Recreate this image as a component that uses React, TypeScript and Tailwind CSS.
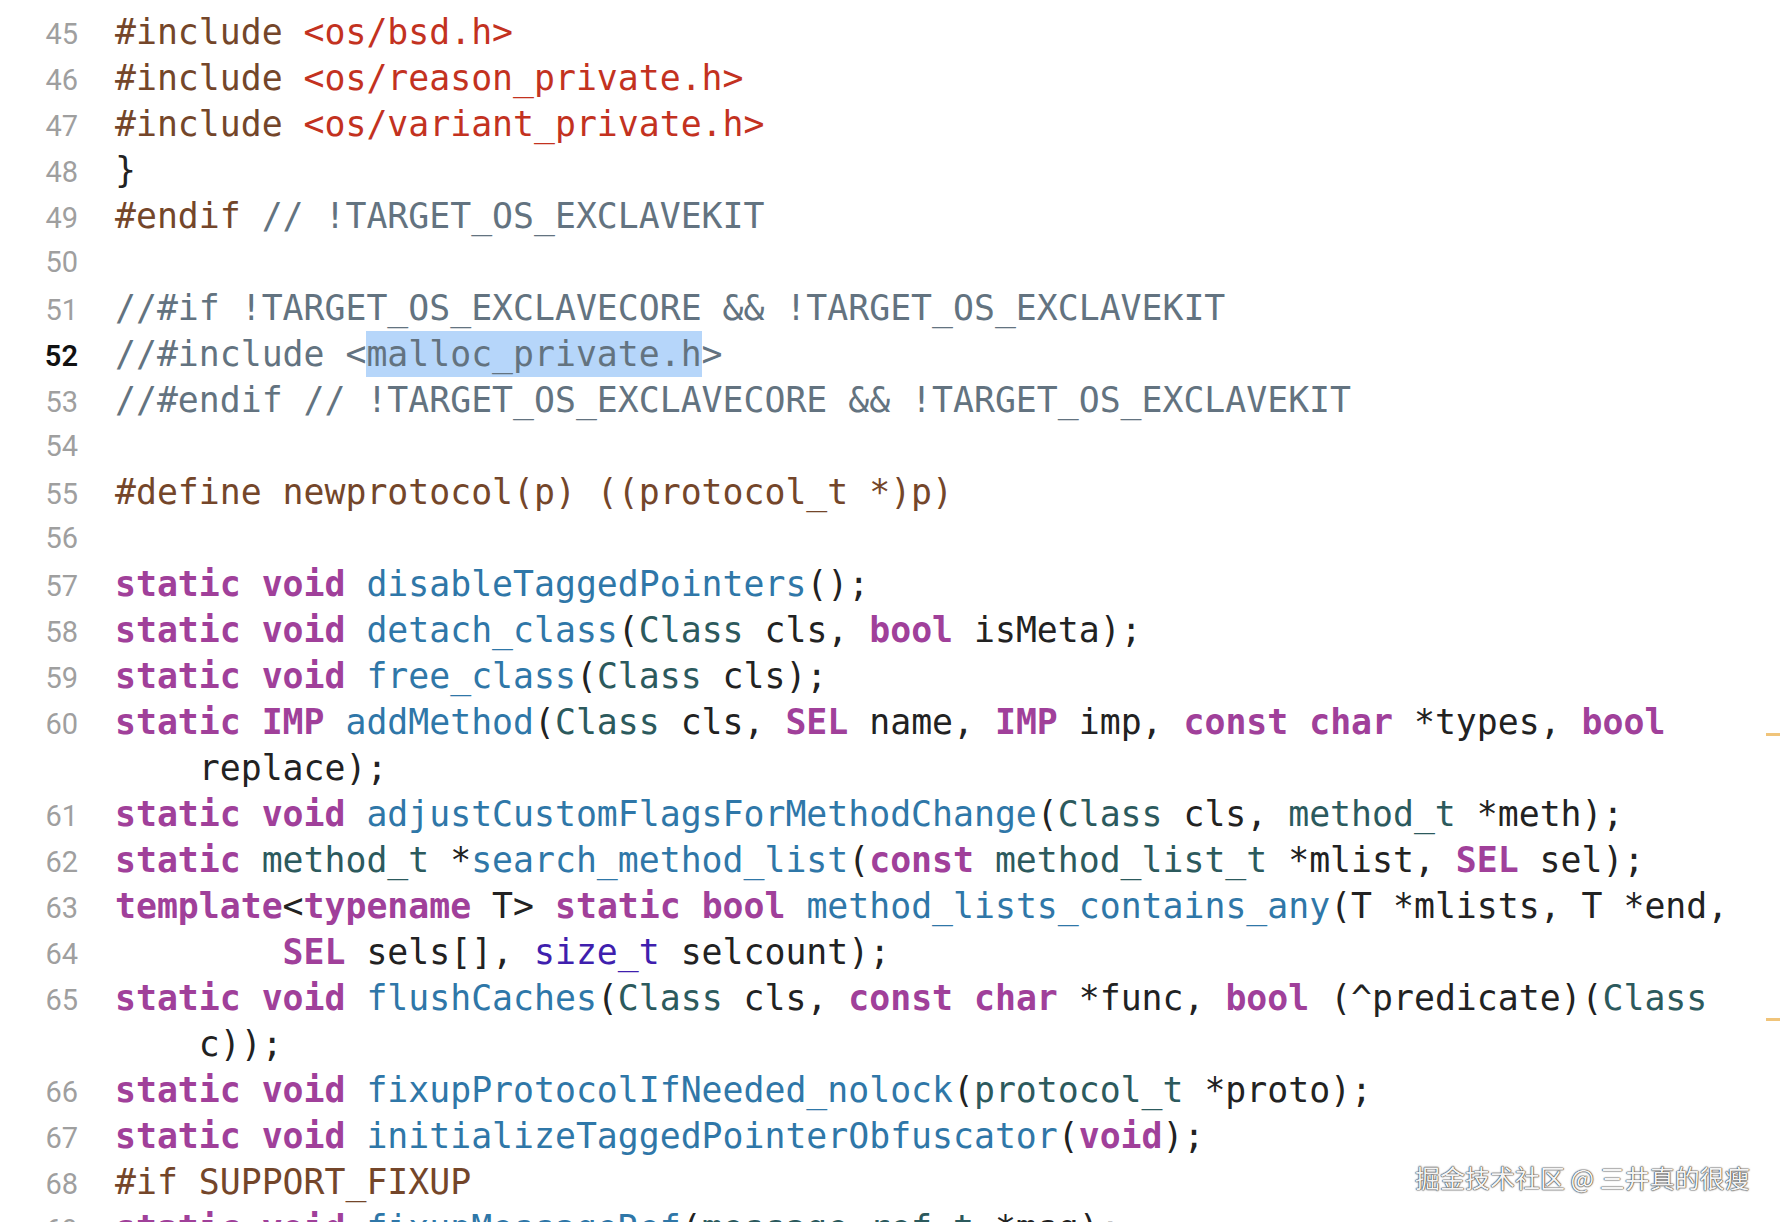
import React from "react";

type Tok = [string, string];

const cls: Record<string, string> = {
  p: "text-[#74462a]",
  s: "text-[#c3321f]",
  c: "text-[#637380]",
  k: "text-[#a0409a] font-bold",
  f: "text-[#2f77a8]",
  t: "text-[#2c5a5d]",
  o: "text-[#3f1fae]",
  x: "text-[#222222]",
};

type Row = { n?: number; toks: Tok[] };

const rows: Row[] = [
  { n: 45, toks: [["#include ", "p"], ["<os/bsd.h>", "s"]] },
  { n: 46, toks: [["#include ", "p"], ["<os/reason_private.h>", "s"]] },
  { n: 47, toks: [["#include ", "p"], ["<os/variant_private.h>", "s"]] },
  { n: 48, toks: [["}", "x"]] },
  { n: 49, toks: [["#endif ", "p"], ["// !TARGET_OS_EXCLAVEKIT", "c"]] },
  { n: 50, toks: [] },
  { n: 51, toks: [["//#if !TARGET_OS_EXCLAVECORE && !TARGET_OS_EXCLAVEKIT", "c"]] },
  { n: 52, toks: [["//#include <", "c"], ["malloc_private.h", "sel"], [">", "c"]] },
  { n: 53, toks: [["//#endif // !TARGET_OS_EXCLAVECORE && !TARGET_OS_EXCLAVEKIT", "c"]] },
  { n: 54, toks: [] },
  { n: 55, toks: [["#define newprotocol(p) ((protocol_t *)p)", "p"]] },
  { n: 56, toks: [] },
  { n: 57, toks: [["static", "k"], [" ", "x"], ["void", "k"], [" ", "x"], ["disableTaggedPointers", "f"], ["();", "x"]] },
  {
    n: 58,
    toks: [
      ["static", "k"], [" ", "x"], ["void", "k"], [" ", "x"], ["detach_class", "f"], ["(", "x"],
      ["Class", "t"], [" cls, ", "x"], ["bool", "k"], [" isMeta);", "x"],
    ],
  },
  {
    n: 59,
    toks: [
      ["static", "k"], [" ", "x"], ["void", "k"], [" ", "x"], ["free_class", "f"], ["(", "x"],
      ["Class", "t"], [" cls);", "x"],
    ],
  },
  {
    n: 60,
    toks: [
      ["static", "k"], [" ", "x"], ["IMP", "k"], [" ", "x"], ["addMethod", "f"], ["(", "x"],
      ["Class", "t"], [" cls, ", "x"], ["SEL", "k"], [" name, ", "x"], ["IMP", "k"], [" imp, ", "x"],
      ["const", "k"], [" ", "x"], ["char", "k"], [" *types, ", "x"], ["bool", "k"],
    ],
  },
  { toks: [["    replace);", "x"]] },
  {
    n: 61,
    toks: [
      ["static", "k"], [" ", "x"], ["void", "k"], [" ", "x"], ["adjustCustomFlagsForMethodChange", "f"],
      ["(", "x"], ["Class", "t"], [" cls, ", "x"], ["method_t", "t"], [" *meth);", "x"],
    ],
  },
  {
    n: 62,
    toks: [
      ["static", "k"], [" ", "x"], ["method_t", "t"], [" *", "x"], ["search_method_list", "f"], ["(", "x"],
      ["const", "k"], [" ", "x"], ["method_list_t", "t"], [" *mlist, ", "x"], ["SEL", "k"], [" sel);", "x"],
    ],
  },
  {
    n: 63,
    toks: [
      ["template", "k"], ["<", "x"], ["typename", "k"], [" T> ", "x"], ["static", "k"], [" ", "x"],
      ["bool", "k"], [" ", "x"], ["method_lists_contains_any", "f"], ["(T *mlists, T *end,", "x"],
    ],
  },
  {
    n: 64,
    toks: [["        ", "x"], ["SEL", "k"], [" sels[], ", "x"], ["size_t", "o"], [" selcount);", "x"]],
  },
  {
    n: 65,
    toks: [
      ["static", "k"], [" ", "x"], ["void", "k"], [" ", "x"], ["flushCaches", "f"], ["(", "x"],
      ["Class", "t"], [" cls, ", "x"], ["const", "k"], [" ", "x"], ["char", "k"], [" *func, ", "x"],
      ["bool", "k"], [" (^predicate)(", "x"], ["Class", "t"],
    ],
  },
  { toks: [["    c));", "x"]] },
  {
    n: 66,
    toks: [
      ["static", "k"], [" ", "x"], ["void", "k"], [" ", "x"], ["fixupProtocolIfNeeded_nolock", "f"], ["(", "x"],
      ["protocol_t", "t"], [" *proto);", "x"],
    ],
  },
  {
    n: 67,
    toks: [
      ["static", "k"], [" ", "x"], ["void", "k"], [" ", "x"], ["initializeTaggedPointerObfuscator", "f"],
      ["(", "x"], ["void", "k"], [");", "x"],
    ],
  },
  { n: 68, toks: [["#if SUPPORT_FIXUP", "p"]] },
  {
    n: 69,
    toks: [
      ["static", "k"], [" ", "x"], ["void", "k"], [" ", "x"], ["fixupMessageRef", "f"], ["(", "x"],
      ["message_ref_t", "t"], [" *msg);", "x"],
    ],
  },
];

export default function App() {
  return (
    <div className="relative w-[1780px] h-[1222px] overflow-hidden bg-white">
      <div className="flex flex-col pt-[9px]">
        {rows.map((r, i) => (
          <div key={i} className="flex items-baseline h-[46px]">
            <div
              className={
                "w-[78px] shrink-0 text-right text-[29px] leading-[46px] font-['Roboto',sans-serif] " +
                (r.n === 52 ? "text-[#111111] font-semibold" : "text-[#9f9f9f]")
              }
            >
              {r.n ?? ""}
            </div>
            <div className="pl-[37px] whitespace-pre text-[34.8px] leading-[46px] font-['DejaVu_Sans_Mono',monospace]">
              {r.toks.map((t, j) =>
                t[1] === "sel" ? (
                  <span key={j} className="text-[#637380] bg-[#b6d6fa] inline-block leading-[46px]">
                    {t[0]}
                  </span>
                ) : (
                  <span key={j} className={cls[t[1]]}>
                    {t[0]}
                  </span>
                )
              )}
            </div>
          </div>
        ))}
      </div>

      <div className="absolute right-0 top-[733px] w-[14px] h-[3px] bg-[#f0c47a]" />
      <div className="absolute right-0 top-[1018px] w-[14px] h-[3px] bg-[#f0c47a]" />

      <div className="absolute left-[1415px] top-[1160px] text-[25px] leading-[34px] text-[#f4f4f4] font-['Noto_Sans_CJK_SC','Noto_Sans',sans-serif] [text-shadow:0_0_1px_#333,0_0_1px_#333,0_0_2px_#555]">
        掘金技术社区 @ 三井真的很瘦
      </div>
    </div>
  );
}
